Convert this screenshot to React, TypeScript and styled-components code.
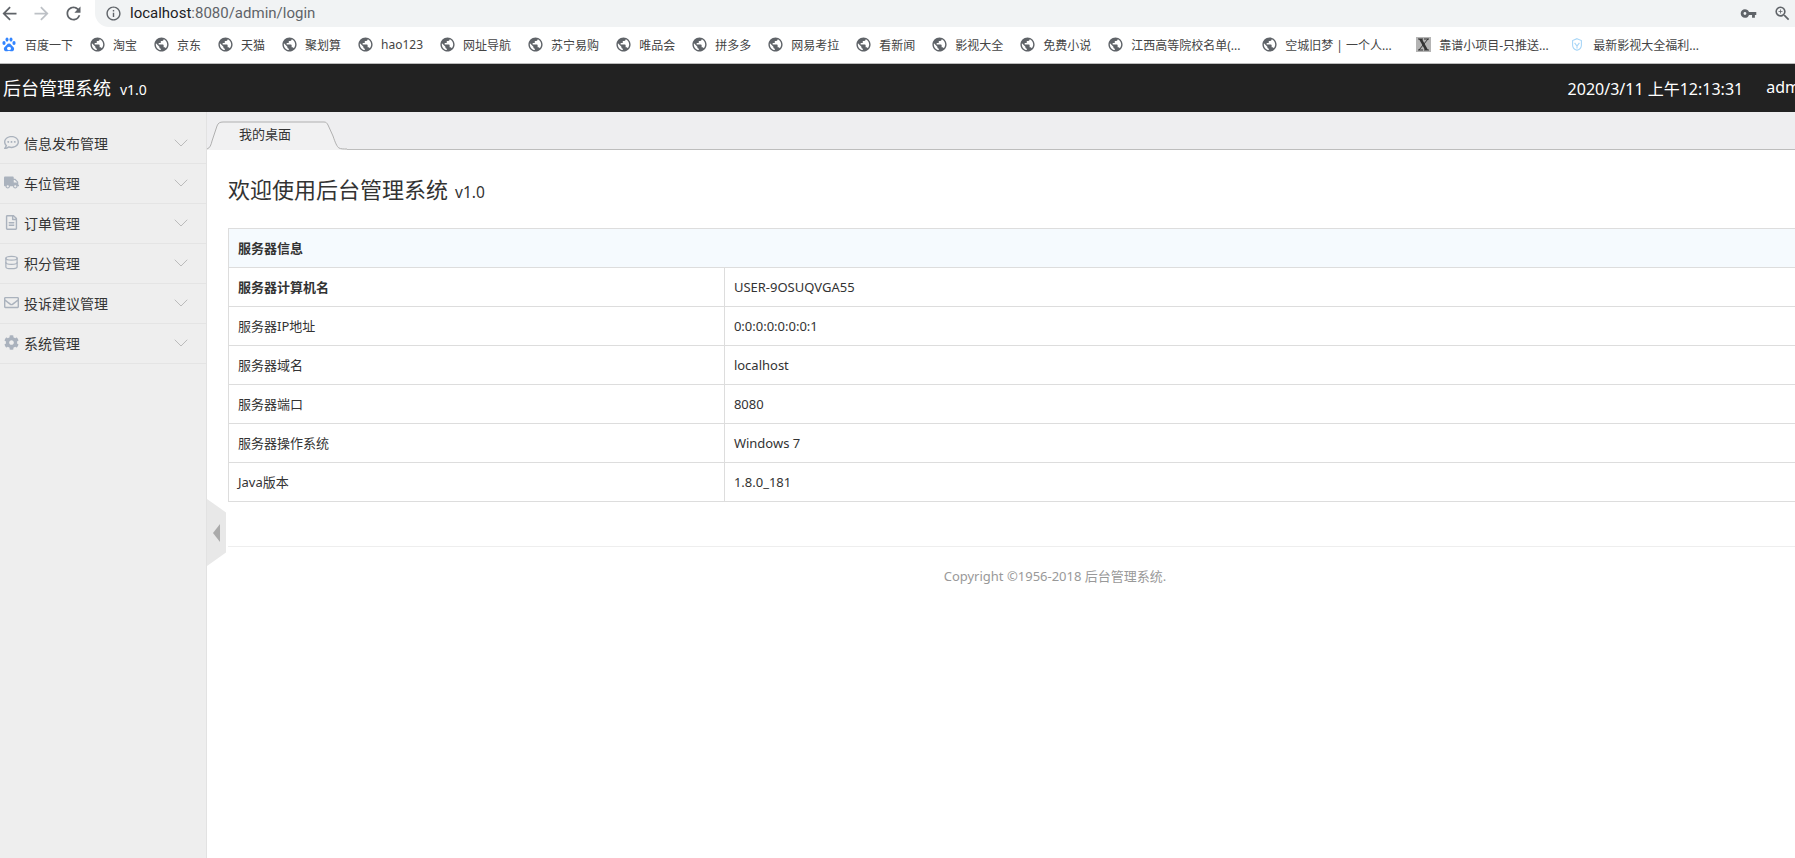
import * as React from "react";
import styled, { createGlobalStyle } from "styled-components";
import {
  MdArrowBack,
  MdArrowForward,
  MdRefresh,
  MdInfoOutline,
  MdVpnKey,
  MdZoomIn,
  MdPublic,
} from "react-icons/md";
import {
  FaRegCommentDots,
  FaTruck,
  FaRegFileAlt,
  FaRegEnvelope,
  FaCog,
} from "react-icons/fa";
import { ChevronDown, Database } from "lucide-react";

const FONT = `"Noto Sans", "Noto Sans CJK SC", sans-serif`;

const GlobalStyle = createGlobalStyle`
  html, body {
    margin: 0;
    padding: 0;
    background: #fff;
    overflow: hidden;
  }
  * {
    box-sizing: border-box;
  }
`;

const Screen = styled.div`
  width: 1795px;
  height: 858px;
  overflow: hidden;
  font-family: ${FONT};
  color: #333;
`;

const BrowserBar = styled.div`
  display: flex;
  align-items: center;
  gap: 14px;
  height: 27px;
  background: #fff;
`;

const NavButton = styled.span<{ $dim?: boolean }>`
  display: flex;
  width: 18px;
  justify-content: center;
  font-size: 21px;
  color: ${(p) => (p.$dim ? "#bdc1c6" : "#5f6368")};

  svg {
    flex: none;
  }
`;

const Omnibox = styled.div`
  flex: 1;
  height: 27px;
  margin-left: -1px;
  display: flex;
  align-items: center;
  padding: 0 3px 0 10px;
  background: #f1f3f4;
  border-bottom-left-radius: 14px;
  color: #5f6368;
`;

const InfoIcon = styled(MdInfoOutline)`
  font-size: 17px;
  margin-right: 8px;
  color: #5f6368;
`;

const Url = styled.span`
  font-family: Roboto, sans-serif;
  font-size: 15px;
  padding-bottom: 2px;
  color: #5f6368;
  flex: 1;

  b {
    font-weight: 400;
    color: #202124;
  }
`;

const KeyIcon = styled(MdVpnKey)`
  font-size: 17px;
  margin-right: 16px;
`;

const ZoomIcon = styled(MdZoomIn)`
  font-size: 19px;
`;

const BookmarkBar = styled.div`
  display: flex;
  align-items: center;
  height: 37px;
  padding: 0 0 1px 2px;
  background: #fff;
  border-bottom: 1px solid #bcbcbc;
`;

const Bookmark = styled.div`
  display: flex;
  align-items: center;
  gap: 9px;
  margin-right: 17px;
  font-size: 12px;
  color: #444;
  white-space: nowrap;
`;

const BookmarkLabel = styled.span<{ $truncated?: boolean }>`
  width: ${(p) => (p.$truncated ? "114px" : "auto")};
`;

const BookmarkIcon = styled.span`
  display: flex;
  width: 14px;
  height: 14px;
  align-items: center;
  justify-content: center;
  font-size: 17px;
  color: #5f6368;

  svg {
    flex: none;
  }
`;

const Page = styled.div`
  width: 1903px;
  height: 794px;
  display: flex;
  flex-direction: column;
`;

const Header = styled.header`
  height: 48px;
  flex: none;
  display: flex;
  align-items: center;
  padding: 0 89px 0 3px;
  background: #222;
  color: #fff;
`;

const Brand = styled.div`
  font-size: 18px;
  line-height: 1;
`;

const Version = styled.span`
  font-size: 14px;
  margin-left: 9px;
`;

const HeaderRight = styled.div`
  margin-left: auto;
  display: flex;
  gap: 23px;
  font-size: 16px;
`;

const Body = styled.div`
  flex: 1;
  display: flex;
  min-height: 0;
`;

const Sidebar = styled.aside`
  width: 207px;
  flex: none;
  padding-top: 12px;
  background: #eee;
  border-right: 1px solid #e2e2e2;
`;

const MenuItem = styled.div`
  height: 40px;
  display: flex;
  align-items: center;
  padding: 0 13px 2px 4px;
  border-bottom: 1px solid #e4e4e4;
  font-size: 14px;
  color: #333;
`;

const MenuIcon = styled.span`
  display: flex;
  width: 14px;
  justify-content: center;
  margin-right: 6px;
  font-size: 15px;
  color: #aab2bd;

  svg {
    flex: none;
  }
`;

const MenuLabel = styled.span`
  flex: 1;
`;

const Chevron = styled(ChevronDown)`
  color: #bbb;
`;

const Main = styled.main`
  position: relative;
  flex: 1;
  min-width: 0;
  background: #fff;
`;

const TabBar = styled.div`
  height: 38px;
  display: flex;
  align-items: flex-end;
  background: #eeeef0;
  border-bottom: 1px solid #bdbdbd;
`;

const Tab = styled.div`
  position: relative;
  width: 140px;
  height: 29px;
  margin-bottom: -1px;
  padding: 1px 0 0 32px;
  font-size: 13px;
  line-height: 24px;
  color: #333;

  svg {
    position: absolute;
    top: 0;
    left: 0;
  }

  span {
    position: relative;
  }
`;

const Content = styled.div`
  padding: 21px 21px 0 21px;
`;

const Title = styled.h1`
  margin: 0 0 18px;
  font-size: 22px;
  font-weight: 400;
  line-height: 36px;
  color: #333;

  small {
    font-size: 15.5px;
    margin-left: 7px;
  }
`;

const InfoTable = styled.table`
  width: 100%;
  border-collapse: collapse;
  table-layout: fixed;
  font-size: 13px;
  color: #333;
`;

const HeadCell = styled.th`
  height: 39px;
  padding: 0 9px 1px;
  text-align: left;
  font-weight: 700;
  background: #f5fafe;
  border: 1px solid #ddd;
`;

const Cell = styled.td<{ $bold?: boolean }>`
  height: 39px;
  padding: 0 9px 1px;
  border: 1px solid #ddd;
  font-weight: ${(p) => (p.$bold ? 700 : 400)};
`;

const Divider = styled.hr`
  margin: 44px 0 0;
  border: 0;
  border-top: 1px solid #eee;
`;

const Copyright = styled.footer`
  margin-top: 20px;
  text-align: center;
  font-size: 13px;
  line-height: 18px;
  color: #999;
`;

const CollapseHandle = styled.div`
  position: absolute;
  top: 387px;
  left: 0;
  width: 19px;
  height: 67px;
  display: flex;
  align-items: center;
  padding-left: 6px;
  background: #e8e8e8;
  clip-path: polygon(0 0, 100% 20%, 100% 80%, 0 100%);

  &::before {
    content: "";
    border-style: solid;
    border-width: 9px 7px 9px 0;
    border-color: transparent #aaa transparent transparent;
  }
`;

function BaiduIcon() {
  return (
    <svg width="14" height="15" viewBox="0 0 14 15" fill="#3385ff">
      <ellipse cx="2" cy="6" rx="1.6" ry="2" />
      <ellipse cx="5" cy="2.6" rx="1.5" ry="2.1" />
      <ellipse cx="9" cy="2.6" rx="1.5" ry="2.1" />
      <ellipse cx="12" cy="6" rx="1.6" ry="2" />
      <path d="M7 6.5c-2 0-2.4 2-3.8 3C2 10.400 1.600 11.500 2 12.800c.5 1.400 2 1.700 3.200 1.400 1.200-.3 2.400-.3 3.600 0 1.200.3 2.700 0 3.200-1.400.4-1.300 0-2.400-1.200-3.300C9.400 8.500 9 6.500 7 6.500z" />
      <ellipse cx="7" cy="11.500" rx="2" ry="1.800" fill="#fff" />
    </svg>
  );
}

function XSiteIcon() {
  return (
    <svg width="15" height="15" viewBox="0 0 15 15">
      <rect width="15" height="15" fill="#b4b4b4" />
      <path d="M3 2h3l6 11H9z" fill="#333" />
      <path d="M12 2 3 13M2 2h5M8 13h5M8 2h5M2 13h5" stroke="#333" strokeWidth="1" fill="none" />
    </svg>
  );
}

function ShieldIcon() {
  return (
    <svg width="10" height="13" viewBox="0 0 10 13" fill="none" stroke="#a8d6f7" strokeWidth="1.100">
      <path d="M5 .7 9.400 2.600v4.600C9.400 9.600 7 11.600 5 12.300 3 11.600.6 9.600.6 7.200V2.600z" />
      <path d="M2.600 4.800 5 8l2.400-3.200M5 8v2.500" />
    </svg>
  );
}

const bookmarks: { label: string; icon?: React.ReactNode; truncated?: boolean }[] = [
  { label: "百度一下", icon: <BaiduIcon /> },
  { label: "淘宝" },
  { label: "京东" },
  { label: "天猫" },
  { label: "聚划算" },
  { label: "hao123" },
  { label: "网址导航" },
  { label: "苏宁易购" },
  { label: "唯品会" },
  { label: "拼多多" },
  { label: "网易考拉" },
  { label: "看新闻" },
  { label: "影视大全" },
  { label: "免费小说" },
  { label: "江西高等院校名单(...", truncated: true },
  { label: "空城旧梦 | 一个人...", truncated: true },
  { label: "靠谱小项目-只推送...", icon: <XSiteIcon />, truncated: true },
  { label: "最新影视大全福利...", icon: <ShieldIcon />, truncated: true },
];

const menu = [
  { label: "信息发布管理", icon: <FaRegCommentDots /> },
  { label: "车位管理", icon: <FaTruck /> },
  { label: "订单管理", icon: <FaRegFileAlt /> },
  { label: "积分管理", icon: <Database size={15} strokeWidth={2} /> },
  { label: "投诉建议管理", icon: <FaRegEnvelope /> },
  { label: "系统管理", icon: <FaCog /> },
];

const serverInfo = [
  ["服务器计算机名", "USER-9OSUQVGA55"],
  ["服务器IP地址", "0:0:0:0:0:0:0:1"],
  ["服务器域名", "localhost"],
  ["服务器端口", "8080"],
  ["服务器操作系统", "Windows 7"],
  ["Java版本", "1.8.0_181"],
];

export default function App() {
  return (
    <Screen>
      <GlobalStyle />
      <BrowserBar>
        <NavButton>
          <MdArrowBack />
        </NavButton>
        <NavButton $dim>
          <MdArrowForward />
        </NavButton>
        <NavButton>
          <MdRefresh />
        </NavButton>
        <Omnibox>
          <InfoIcon />
          <Url>
            <b>localhost</b>:8080/admin/login
          </Url>
          <KeyIcon />
          <ZoomIcon />
        </Omnibox>
      </BrowserBar>
      <BookmarkBar>
        {bookmarks.map((b) => (
          <Bookmark key={b.label}>
            <BookmarkIcon>{b.icon ?? <MdPublic />}</BookmarkIcon>
            <BookmarkLabel $truncated={b.truncated}>{b.label}</BookmarkLabel>
          </Bookmark>
        ))}
      </BookmarkBar>
      <Page>
        <Header>
          <Brand>
            后台管理系统<Version>v1.0</Version>
          </Brand>
          <HeaderRight>
            <span>2020/3/11 上午12:13:31</span>
            <span>admin</span>
          </HeaderRight>
        </Header>
        <Body>
          <Sidebar>
            {menu.map(({ label, icon }) => (
              <MenuItem key={label}>
                <MenuIcon>{icon}</MenuIcon>
                <MenuLabel>{label}</MenuLabel>
                <Chevron size={24} strokeWidth={1} />
              </MenuItem>
            ))}
          </Sidebar>
          <Main>
            <TabBar>
              <Tab>
                <svg width="140" height="29" viewBox="0 0 140 29">
                  <path
                    d="M0 29V28C3 27 4 24 5 20L10 5C11 2 13 1 16 1H117C119 1 120 2 121 4L126 15C128 21 130 26 132 27C134 28 136 28 140 28V29Z"
                    fill="#f1f1f2"
                  />
                  <path
                    d="M0 28C3 27 4 24 5 20L10 5C11 2 13 1 16 1H117C119 1 120 2 121 4L126 15C128 21 130 26 132 27C134 28 136 28 140 28"
                    fill="none"
                    stroke="#b0b0b0"
                  />
                </svg>
                <span>我的桌面</span>
              </Tab>
            </TabBar>
            <Content>
              <Title>
                欢迎使用后台管理系统<small>v1.0</small>
              </Title>
              <InfoTable>
                <colgroup>
                  <col width="30%" />
                  <col width="70%" />
                </colgroup>
                <thead>
                  <tr>
                    <HeadCell colSpan={2}>服务器信息</HeadCell>
                  </tr>
                </thead>
                <tbody>
                  {serverInfo.map(([name, value], i) => (
                    <tr key={name}>
                      <Cell $bold={i === 0}>{name}</Cell>
                      <Cell>{value}</Cell>
                    </tr>
                  ))}
                </tbody>
              </InfoTable>
              <Divider />
              <Copyright>Copyright ©1956-2018 后台管理系统.</Copyright>
            </Content>
            <CollapseHandle />
          </Main>
        </Body>
      </Page>
    </Screen>
  );
}
